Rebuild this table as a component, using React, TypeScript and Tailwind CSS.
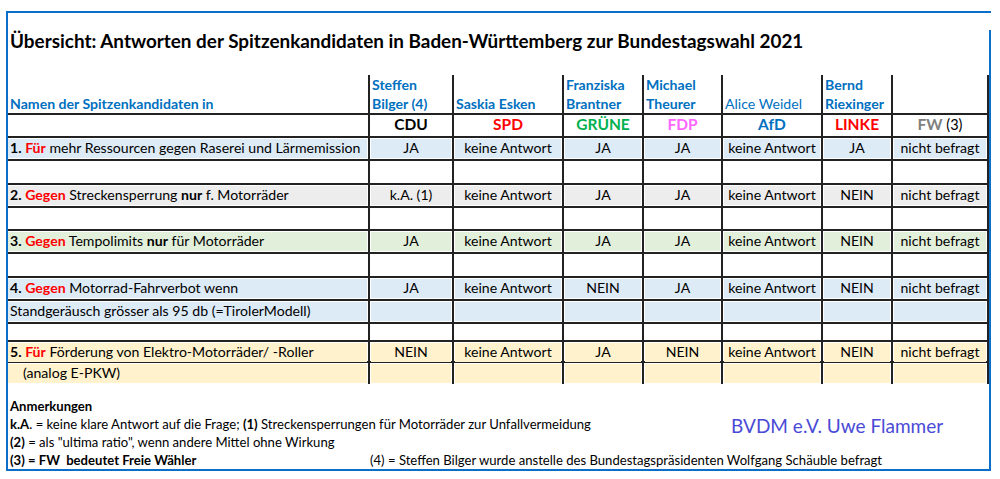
import React from "react";

const GRID = "grid grid-cols-[362px_84px_110px_80px_79px_100px_70px_96px]";

type Row = {
  h: string;
  bg: string;
  label?: React.ReactNode;
  vals?: string[];
  border?: boolean;
};

const Red = ({ children }: { children: React.ReactNode }) => (
  <b className="text-[#ff0000] font-bold">{children}</b>
);

const rows: Row[] = [
  {
    h: "h-[23px]",
    bg: "bg-[#ddebf7]",
    label: (
      <>
        <b>1.</b> <Red>Für</Red> mehr Ressourcen gegen Raserei und Lärmemission
      </>
    ),
    vals: ["JA", "keine Antwort", "JA", "JA", "keine Antwort", "JA", "nicht befragt"],
  },
  { h: "h-[24px]", bg: "bg-white" },
  {
    h: "h-[23px]",
    bg: "bg-[#ededed]",
    label: (
      <>
        <b>2.</b> <Red>Gegen</Red> Streckensperrung <b>nur</b> f. Motorräder
      </>
    ),
    vals: ["k.A. (1)", "keine Antwort", "JA", "JA", "keine Antwort", "NEIN", "nicht befragt"],
  },
  { h: "h-[23px]", bg: "bg-white" },
  {
    h: "h-[23px]",
    bg: "bg-[#e2efda]",
    label: (
      <>
        <b>3.</b> <Red>Gegen</Red> Tempolimits <b>nur</b> für Motorräder
      </>
    ),
    vals: ["JA", "keine Antwort", "JA", "JA", "keine Antwort", "NEIN", "nicht befragt"],
  },
  { h: "h-[24px]", bg: "bg-white" },
  {
    h: "h-[23px]",
    bg: "bg-[#ddebf7]",
    label: (
      <>
        <b>4.</b> <Red>Gegen</Red> Motorrad-Fahrverbot wenn
      </>
    ),
    vals: ["JA", "keine Antwort", "NEIN", "JA", "keine Antwort", "NEIN", "nicht befragt"],
  },
  {
    h: "h-[23px]",
    bg: "bg-[#ddebf7]",
    label: <>Standgeräusch grösser als 95 db (=TirolerModell)</>,
  },
  { h: "h-[18px]", bg: "bg-white" },
  {
    h: "h-[21px]",
    bg: "bg-[#fff2cc]",
    label: (
      <>
        <b>5.</b> <Red>Für</Red> Förderung von Elektro-Motorräder/ -Roller
      </>
    ),
    vals: ["NEIN", "keine Antwort", "JA", "NEIN", "keine Antwort", "NEIN", "nicht befragt"],
  },
  {
    h: "h-[17px]",
    bg: "bg-[#fff2cc]",
    label: <span className="pl-[13px]">(analog E-PKW)</span>,
    border: false,
  },
];

const names: { l1?: string; l2: string; bold: boolean }[] = [
  { l1: "Steffen", l2: "Bilger (4)", bold: true },
  { l2: "Saskia Esken", bold: true },
  { l1: "Franziska", l2: "Brantner", bold: true },
  { l1: "Michael", l2: "Theurer", bold: true },
  { l2: "Alice Weidel", bold: false },
  { l1: "Bernd", l2: "Riexinger", bold: true },
  { l2: "", bold: true },
];

const parties: React.ReactNode[] = [
  <span className="font-bold text-black">CDU</span>,
  <span className="font-bold text-[#ff0000]">SPD</span>,
  <span className="font-bold text-[#00b050]">GRÜNE</span>,
  <span className="font-bold text-[#ff66ff]">FDP</span>,
  <span className="font-bold text-[#0070c0]">AfD</span>,
  <span className="font-bold text-[#ff0000]">LINKE</span>,
  <span>
    <span className="font-bold text-[#808080]">FW</span>
    <span className="text-[14.5px] text-black"> (3)</span>
  </span>,
];

export default function App() {
  return (
    <div
      className="w-[1000px] h-[479px] bg-white text-black text-[14.1px] overflow-hidden"
      style={{ fontFamily: "Lato, 'Liberation Sans', sans-serif" }}
    >
      <div className="ml-[6px] mt-[11px] w-[985px] h-[460px] border-l-2 border-t-2 border-b-2 border-[#0b6fca] flex">
        <div className="w-[981px] flex flex-col">
          {/* title */}
          <div className="h-[62px] pt-[17px] pl-[2px] text-[18.9px] leading-[22px] font-bold whitespace-nowrap">
            Übersicht: Antworten der Spitzenkandidaten in Baden-Württemberg zur Bundestagswahl 2021
          </div>

          {/* header names */}
          <div className={`${GRID} h-[40px] border-b-2 border-[#222] text-[14.1px]`}>
            <div className="border-r-2 border-[#222] flex items-end pl-[2px] pb-px leading-[19px] font-bold text-[#0070c0]">
              <span>Namen der Spitzenkandidaten in</span>
            </div>
            {names.map((n, i) => (
              <div
                key={i}
                className={`border-r-2 border-[#222] flex flex-col justify-end pl-[2px] pb-px leading-[19px] text-[#0070c0] whitespace-nowrap ${
                  n.bold ? "font-bold" : "font-normal"
                }`}
              >
                {n.l1 && <div>{n.l1}</div>}
                <div>{n.l2}</div>
              </div>
            ))}
          </div>

          {/* parties */}
          <div className={`${GRID} h-[23px] border-b-2 border-[#222]`}>
            <div className="border-r-2 border-[#222]" />
            {parties.map((p, i) => (
              <div
                key={i}
                className="border-r-2 border-[#222] flex items-center justify-center pb-[2px] text-[15.5px] leading-[19px]"
              >
                {p}
              </div>
            ))}
          </div>

          {/* rows */}
          {rows.map((r, ri) => (
            <div
              key={ri}
              className={`${GRID} ${r.h} ${r.border === false ? "" : "border-b-2 border-[#222]"}`}
            >
              <div className="border-r-2 border-[#222] py-px pr-px">
                <div className={`h-full ${r.bg} flex items-center pl-[2px] pb-px whitespace-pre leading-[18px]`}>
                  <span>{r.label}</span>
                </div>
              </div>
              {Array.from({ length: 7 }).map((_, ci) => (
                <div key={ci} className="border-r-2 border-[#222] p-px">
                  <div
                    className={`h-full ${r.bg} flex items-center justify-center pb-px whitespace-nowrap leading-[18px]`}
                  >
                    {r.vals ? r.vals[ci] : ""}
                  </div>
                </div>
              ))}
            </div>
          ))}

          {/* notes */}
          <div className="pt-[17px] pl-[2px] text-[13.1px] leading-[18px]">
            <div className="font-bold">Anmerkungen</div>
            <div className="flex h-[18px] items-center">
              <div className="w-[721px] whitespace-nowrap">
                <b>k.A</b>. = keine klare Antwort auf die Frage; <b>(1)</b> Streckensperrungen für
                Motorräder zur Unfallvermeidung
              </div>
              <div className="text-[19px] leading-[18px] text-[#4a4ad6] whitespace-nowrap pt-[4px]">
                BVDM e.V. Uwe Flammer
              </div>
            </div>
            <div>
              <b>(2)</b> = als "ultima ratio", wenn andere Mittel ohne Wirkung
            </div>
            <div className="flex">
              <div className="w-[360px] font-bold whitespace-pre">(3) = FW  bedeutet Freie Wähler</div>
              <div className="whitespace-nowrap">
                (4) = Steffen Bilger wurde anstelle des Bundestagspräsidenten Wolfgang Schäuble befragt
              </div>
            </div>
          </div>
        </div>
        <div className="w-[2px] mt-[17px] bg-[#0b6fca]" />
      </div>
    </div>
  );
}
